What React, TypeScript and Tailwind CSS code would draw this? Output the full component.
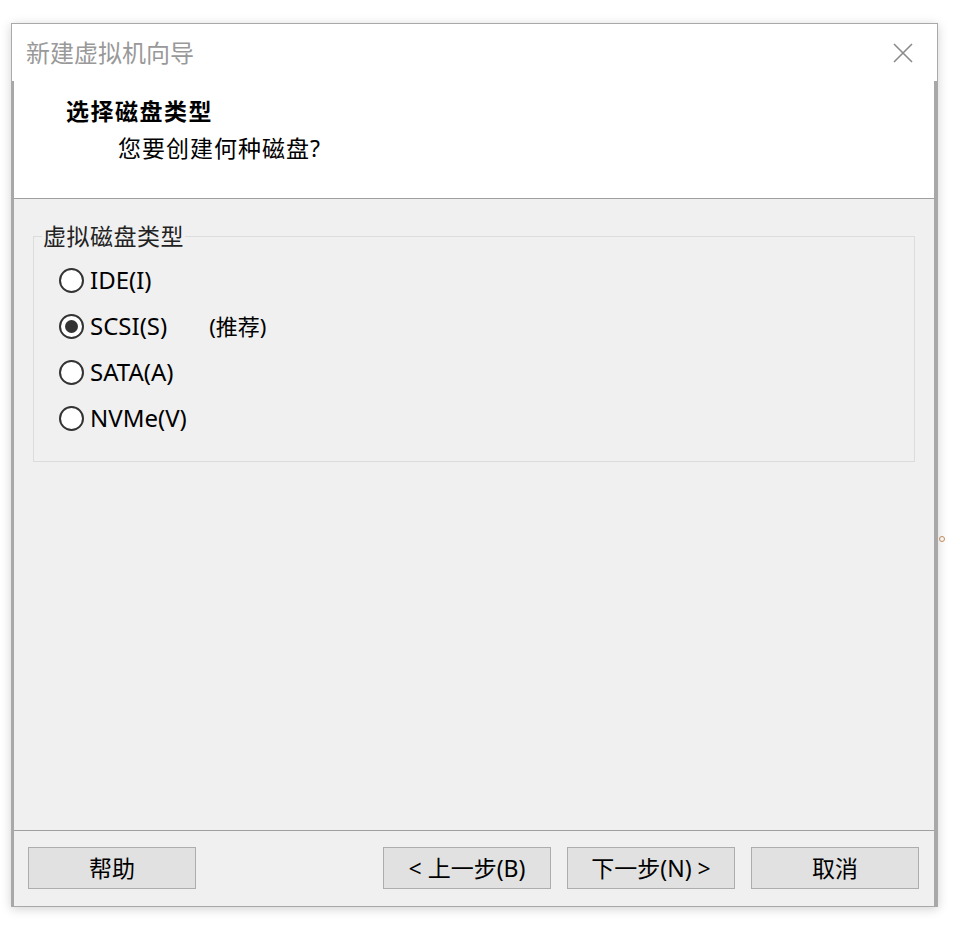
const cjk = { fontFamily: '"Noto Sans", "Noto Sans CJK SC", sans-serif' };

function Radio({ label, checked, extra }: { label: string; checked?: boolean; extra?: string }) {
  return (
    <div className="flex items-center h-[46px]">
      <span className="w-[25px] h-[25px] rounded-full border-2 border-[#333] bg-white flex items-center justify-center">
        {checked && <span className="w-[13px] h-[13px] rounded-full bg-[#333]" />}
      </span>
      <span className="ml-[6px] text-[24px] text-black leading-none">{label}</span>
      {extra && <span className="ml-[42px] text-[22px] text-black leading-none">{extra}</span>}
    </div>
  );
}

function Btn({ children }: { children: React.ReactNode }) {
  return (
    <button className="w-[168px] h-[42px] bg-[#e1e1e1] border border-[#adadad] text-[23px] text-black leading-none">
      {children}
    </button>
  );
}

export default function App() {
  return (
    <div className="w-[960px] h-[928px] bg-white relative" style={cjk}>
      <div className="absolute left-[11px] top-[23px] w-[927px] h-[884px] border border-[#a9a9a9] shadow-[0_2px_10px_rgba(0,0,0,0.18)] flex flex-col bg-white">
        {/* title bar */}
        <div className="h-[57px] flex items-center justify-between pl-[14px] pr-[24px] shrink-0">
          <span className="text-[24px] text-[#999] leading-none">新建虚拟机向导</span>
          <svg width="20" height="20" viewBox="0 0 20 20">
            <path d="M1 1 L19 19 M19 1 L1 19" stroke="#8a8a8a" strokeWidth="1.6" />
          </svg>
        </div>

        <div className="flex-1 flex flex-col border-l-2 border-r-[3px] border-[#a8a8a8]">
          {/* header */}
          <div className="h-[118px] bg-white border-b border-[#a0a0a0] shrink-0 pl-[52px] pt-[15px]">
            <div className="text-[23px] font-bold text-black leading-[30px] tracking-[1.5px]">选择磁盘类型</div>
            <div className="text-[23px] text-black leading-[30px] mt-[7px] pl-[52px] tracking-[1px]">您要创建何种磁盘?</div>
          </div>

          {/* body */}
          <div className="flex-1 bg-[#f0f0f0] px-[19px] pt-[37px]">
            <div className="relative border border-[#dcdcdc] h-[226px] pl-[25px] pt-[20px]">
              <span className="absolute left-[8px] -top-[15px] bg-[#f0f0f0] px-[1px] text-[23px] text-[#222] leading-[28px] tracking-[0.5px]">
                虚拟磁盘类型
              </span>
              <Radio label="IDE(I)" />
              <Radio label="SCSI(S)" checked extra="(推荐)" />
              <Radio label="SATA(A)" />
              <Radio label="NVMe(V)" />
            </div>
          </div>

          {/* footer */}
          <div className="h-[76px] bg-[#f0f0f0] border-t border-[#a0a0a0] shrink-0 flex items-start pt-[16px] pl-[14px] pr-[15px]">
            <Btn>帮助</Btn>
            <div className="flex-1" />
            <div className="flex gap-[16px]">
              <Btn>&lt; 上一步(B)</Btn>
              <Btn>下一步(N) &gt;</Btn>
              <Btn>取消</Btn>
            </div>
          </div>
        </div>
      </div>
      <span className="absolute left-[939px] top-[536px] w-[6px] h-[6px] rounded-full border border-[#c08a5a]" />
    </div>
  );
}
